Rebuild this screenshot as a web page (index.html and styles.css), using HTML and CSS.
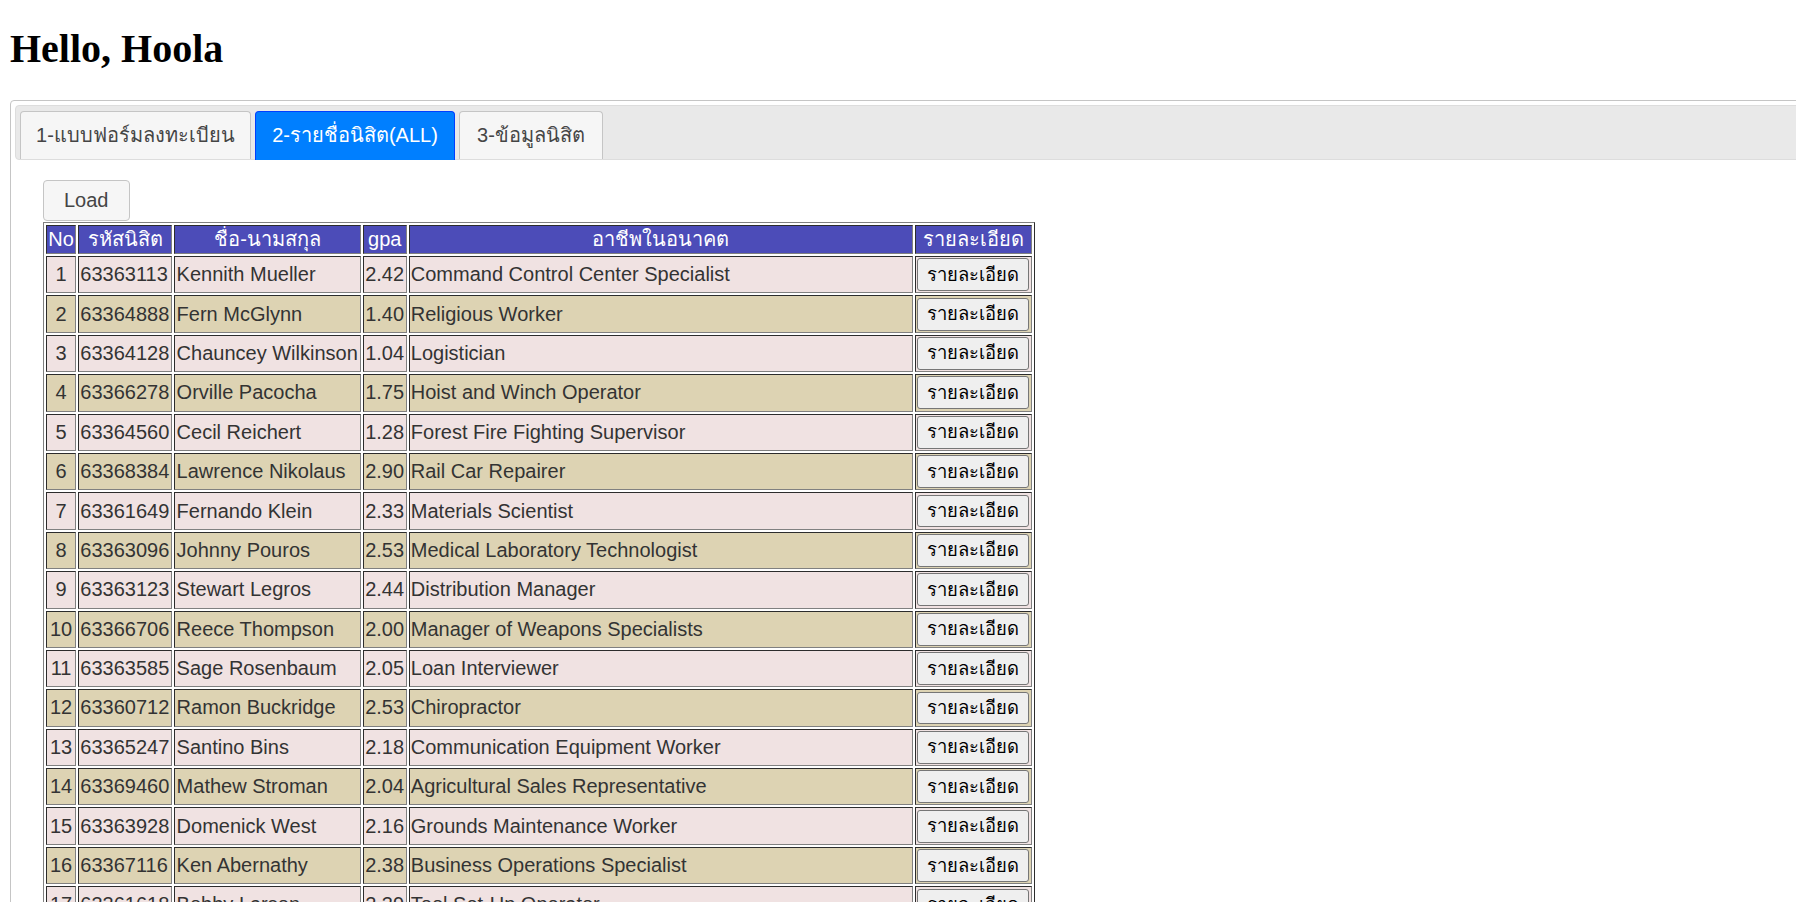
FILE: index.html
```html
<!DOCTYPE html>
<html lang="th">
<head>
<meta charset="utf-8">
<title>Hello, Hoola</title>
<link rel="stylesheet" href="styles.css">
</head>
<body>
<h1 class="greeting">Hello, Hoola</h1>
<div class="tabs">
  <ul class="tabs-nav">
    <li class="tab"><a class="tab-link tab-link-1" href="#tab-1">1-แบบฟอร์มลงทะเบียน</a></li>
    <li class="tab tab-active"><a class="tab-link tab-link-2" href="#tab-2">2-รายชื่อนิสิต(ALL)</a></li>
    <li class="tab"><a class="tab-link tab-link-3" href="#tab-3">3-ข้อมูลนิสิต</a></li>
  </ul>
  <div class="tab-panel" id="tab-2">
    <button class="load-btn" type="button">Load</button>
    <table class="students">
      <thead>
        <tr>
          <th class="col-no">No</th>
          <th class="col-id">รหัสนิสิต</th>
          <th class="col-name">ชื่อ-นามสกุล</th>
          <th class="col-gpa">gpa</th>
          <th class="col-job">อาชีพในอนาคต</th>
          <th class="col-detail">รายละเอียด</th>
        </tr>
      </thead>
      <tbody>
        <tr><td class="cell-no">1</td><td>63363113</td><td>Kennith Mueller</td><td>2.42</td><td>Command Control Center Specialist</td><td><button class="detail-btn" type="button">รายละเอียด</button></td></tr>
        <tr><td class="cell-no">2</td><td>63364888</td><td>Fern McGlynn</td><td>1.40</td><td>Religious Worker</td><td><button class="detail-btn" type="button">รายละเอียด</button></td></tr>
        <tr><td class="cell-no">3</td><td>63364128</td><td>Chauncey Wilkinson</td><td>1.04</td><td>Logistician</td><td><button class="detail-btn" type="button">รายละเอียด</button></td></tr>
        <tr><td class="cell-no">4</td><td>63366278</td><td>Orville Pacocha</td><td>1.75</td><td>Hoist and Winch Operator</td><td><button class="detail-btn" type="button">รายละเอียด</button></td></tr>
        <tr><td class="cell-no">5</td><td>63364560</td><td>Cecil Reichert</td><td>1.28</td><td>Forest Fire Fighting Supervisor</td><td><button class="detail-btn" type="button">รายละเอียด</button></td></tr>
        <tr><td class="cell-no">6</td><td>63368384</td><td>Lawrence Nikolaus</td><td>2.90</td><td>Rail Car Repairer</td><td><button class="detail-btn" type="button">รายละเอียด</button></td></tr>
        <tr><td class="cell-no">7</td><td>63361649</td><td>Fernando Klein</td><td>2.33</td><td>Materials Scientist</td><td><button class="detail-btn" type="button">รายละเอียด</button></td></tr>
        <tr><td class="cell-no">8</td><td>63363096</td><td>Johnny Pouros</td><td>2.53</td><td>Medical Laboratory Technologist</td><td><button class="detail-btn" type="button">รายละเอียด</button></td></tr>
        <tr><td class="cell-no">9</td><td>63363123</td><td>Stewart Legros</td><td>2.44</td><td>Distribution Manager</td><td><button class="detail-btn" type="button">รายละเอียด</button></td></tr>
        <tr><td class="cell-no">10</td><td>63366706</td><td>Reece Thompson</td><td>2.00</td><td>Manager of Weapons Specialists</td><td><button class="detail-btn" type="button">รายละเอียด</button></td></tr>
        <tr><td class="cell-no">11</td><td>63363585</td><td>Sage Rosenbaum</td><td>2.05</td><td>Loan Interviewer</td><td><button class="detail-btn" type="button">รายละเอียด</button></td></tr>
        <tr><td class="cell-no">12</td><td>63360712</td><td>Ramon Buckridge</td><td>2.53</td><td>Chiropractor</td><td><button class="detail-btn" type="button">รายละเอียด</button></td></tr>
        <tr><td class="cell-no">13</td><td>63365247</td><td>Santino Bins</td><td>2.18</td><td>Communication Equipment Worker</td><td><button class="detail-btn" type="button">รายละเอียด</button></td></tr>
        <tr><td class="cell-no">14</td><td>63369460</td><td>Mathew Stroman</td><td>2.04</td><td>Agricultural Sales Representative</td><td><button class="detail-btn" type="button">รายละเอียด</button></td></tr>
        <tr><td class="cell-no">15</td><td>63363928</td><td>Domenick West</td><td>2.16</td><td>Grounds Maintenance Worker</td><td><button class="detail-btn" type="button">รายละเอียด</button></td></tr>
        <tr><td class="cell-no">16</td><td>63367116</td><td>Ken Abernathy</td><td>2.38</td><td>Business Operations Specialist</td><td><button class="detail-btn" type="button">รายละเอียด</button></td></tr>
        <tr><td class="cell-no">17</td><td>63361618</td><td>Bobby Larson</td><td>2.39</td><td>Tool Set-Up Operator</td><td><button class="detail-btn" type="button">รายละเอียด</button></td></tr>
        <tr><td class="cell-no">18</td><td>63362274</td><td>Alvin Hegmann</td><td>1.87</td><td>Tax Preparer</td><td><button class="detail-btn" type="button">รายละเอียด</button></td></tr>
        <tr><td class="cell-no">19</td><td>63365931</td><td>Travis Kuhn</td><td>2.61</td><td>Web Developer</td><td><button class="detail-btn" type="button">รายละเอียด</button></td></tr>
      </tbody>
    </table>
  </div>
</div>
</body>
</html>
```
FILE: styles.css
```css
body {
  margin: 0;
  padding: 0 0 10px 10px;
  overflow-x: clip;
  background: #ffffff;
  color: #000000;
  font-family: "Liberation Serif", "Times New Roman", serif;
}

.greeting {
  margin: 25px 0 28px;
  font-family: "Liberation Serif", "Times New Roman", serif;
  font-size: 40px;
  font-weight: bold;
}

.tabs {
  box-sizing: border-box;
  width: calc(100% + 30px);
  padding: 4px;
  border: 1px solid #c5c5c5;
  border-radius: 4px;
  background: #ffffff;
  color: #333333;
  font-family: "Liberation Sans", Arial, sans-serif;
  font-size: 20px;
}

.tabs-nav {
  display: flex;
  align-items: flex-start;
  margin: 0;
  padding: 4px 4px 0;
  list-style: none;
  border: 1px solid #dddddd;
  border-radius: 4px;
  background: #e9e9e9;
}

.tab {
  margin: 1px 4px 0 0;
  border: 1px solid #c5c5c5;
  border-bottom-width: 0;
  border-radius: 4px 4px 0 0;
  background: #f6f6f6;
}

.tab-link {
  display: block;
  box-sizing: border-box;
  padding: 10px 0;
  line-height: 27px;
  color: #454545;
  text-align: center;
  text-decoration: none;
  white-space: nowrap;
}

.tab-link-1 { width: 229px; }
.tab-link-2 { width: 198px; }
.tab-link-3 { width: 142px; }

.tab-active {
  margin-bottom: -1px;
  padding-bottom: 1px;
  border-color: #003eff;
  background: #007fff;
}

.tab-active .tab-link {
  color: #ffffff;
}

.tab-panel {
  padding: 20px 28px;
}

.load-btn {
  display: block;
  box-sizing: border-box;
  height: 41px;
  margin: 0 0 1px;
  padding: 0 20px;
  border: 1px solid #c5c5c5;
  border-radius: 4px;
  background: #f6f6f6;
  color: #454545;
  font-family: "Liberation Sans", Arial, sans-serif;
  font-size: 20px;
  line-height: 39px;
}

.students {
  table-layout: fixed;
  width: 992px;
  border: 1px outset #808080;
  border-spacing: 2px;
  color: #333333;
  font-family: "Liberation Sans", Arial, sans-serif;
  font-size: 20px;
}

.students th,
.students td {
  padding: 1.25px;
  border: 1px inset #808080;
  white-space: nowrap;
  overflow: hidden;
}

.students th {
  background: #4c4cb8;
  color: #ffffff;
  font-weight: normal;
  line-height: 24.5px;
  text-align: center;
}

.students td {
  line-height: 23px;
  text-align: left;
  vertical-align: middle;
}

.students tbody tr:nth-child(odd) td {
  background: #f0e2e2;
}

.students tbody tr:nth-child(even) td {
  background: #ddd3b3;
}

.students td.cell-no {
  text-align: center;
}

.col-no { width: 25.5px; }
.col-id { width: 89.5px; }
.col-name { width: 181.5px; }
.col-gpa { width: 39px; }
.col-job { width: 498px; }
.col-detail { width: 112.5px; }

.detail-btn {
  display: block;
  box-sizing: border-box;
  width: 112.5px;
  height: 32.9px;
  margin: 0;
  padding: 0 4px;
  border: 1px solid #767676;
  border-radius: 3px;
  background: #efefef;
  color: #000000;
  font-family: "Liberation Sans", Arial, sans-serif;
  font-size: 18.4px;
  line-height: 30px;
  text-align: center;
  white-space: nowrap;
}
```
